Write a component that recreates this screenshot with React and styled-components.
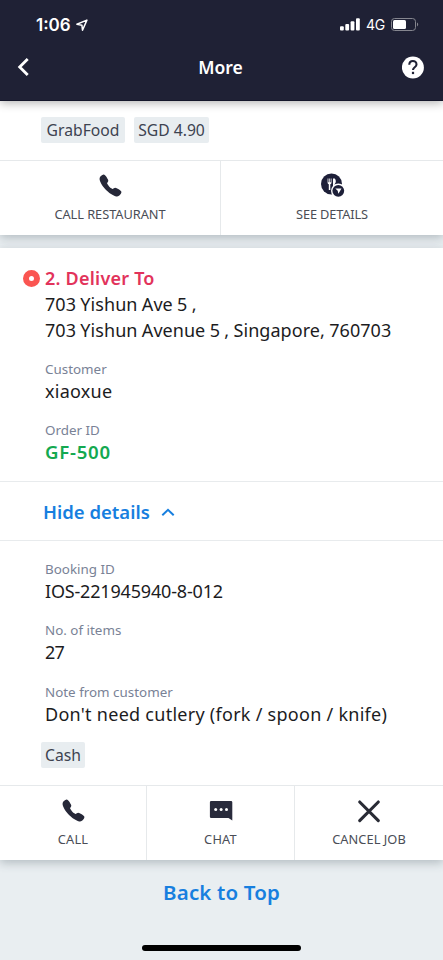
import React from 'react';
import styled, { createGlobalStyle } from 'styled-components';
import { IoCall } from 'react-icons/io5';

const GlobalStyle = createGlobalStyle`
  * { box-sizing: border-box; }
  body { margin: 0; background: #e9eef1; }
`;

const Screen = styled.div`
  display: flex;
  flex-direction: column;
  width: 443px;
  height: 960px;
  overflow: hidden;
  background: #e9eef1;
  color: #1c1c1e;
  font-family: 'Noto Sans', 'Open Sans', sans-serif;
`;

const Header = styled.header`
  flex: none;
  height: 101px;
  background: #1f2135;
  color: #fff;
  border-bottom: 1px solid #14162a;
  box-shadow: 0 2px 9px rgba(0, 0, 0, 0.3);
  z-index: 1;
`;

const StatusBar = styled.div`
  display: flex;
  align-items: center;
  justify-content: space-between;
  height: 49px;
  padding: 0 24px 0 36px;
  font-family: Inter, sans-serif;
`;

const StatusGroup = styled.div`
  display: flex;
  align-items: center;
  gap: ${(p) => p.$gap}px;
`;

const Clock = styled.span`
  font-size: 17px;
  font-weight: 600;
`;

const Network = styled.span`
  width: 19px;
  font-size: 14px;
  letter-spacing: -0.3px;
`;

const NavBar = styled.div`
  display: grid;
  grid-template-columns: 60px 1fr 60px;
  align-items: center;
  height: 36px;
  padding: 0 18px 0 16px;
`;

const NavTitle = styled.h1`
  margin: 0;
  text-align: center;
  font-size: 17.5px;
  font-weight: 600;
  line-height: 36px;
`;

const NavButton = styled.button`
  display: flex;
  justify-content: ${(p) => p.$align};
  padding: 0;
  border: 0;
  background: none;
  color: inherit;
`;

const Card = styled.section`
  flex: none;
  margin-bottom: ${(p) => p.$gap || 0}px;
  background: #fff;
  box-shadow: 0 3px 9px rgba(60, 75, 85, 0.3);
`;

const Tags = styled.div`
  display: flex;
  gap: 9px;
  padding: ${(p) => p.$pad};
`;

const Tag = styled.span`
  width: ${(p) => p.$w}px;
  height: 26px;
  border-radius: 2px;
  background: #e8edf0;
  color: #3d4350;
  text-align: center;
  font-size: 15.7px;
  line-height: 27px;
  letter-spacing: ${(p) => p.$ls || 0}px;
  white-space: nowrap;
`;

const Actions = styled.div`
  display: grid;
  grid-template-columns: ${(p) => p.$cols};
  height: 75px;
  border-top: 1px solid #e6e9eb;
`;

const Action = styled.button`
  display: flex;
  flex-direction: column;
  align-items: center;
  padding: 11px 0 0;
  border: 0;
  border-right: 1px solid #e6e9eb;
  background: none;
  color: #4a4d56;
  font: 400 12.8px/20px 'Noto Sans', sans-serif;
  letter-spacing: ${(p) => p.$ls || 0}px;
  white-space: nowrap;
  &:last-child { border-right: 0; }
`;

const ActionIcon = styled.span`
  display: flex;
  align-items: center;
  justify-content: center;
  height: 27px;
  margin-bottom: 5px;
  color: #262838;
`;

const Delivery = styled.div`
  height: 233px;
  padding: 17px 20px 0 45px;
`;

const Heading = styled.h2`
  display: flex;
  align-items: center;
  gap: 5px;
  margin: 0 0 0 -22px;
  color: #e2335b;
  font-size: 18px;
  font-weight: 600;
  line-height: 26px;
  letter-spacing: 0.22px;
`;

const StopMarker = styled.i`
  width: 17px;
  height: 17px;
  border: 6px solid #fa5551;
  border-radius: 50%;
  background: #fff;
`;

const Address = styled.p`
  margin: 1px 0 16px;
  font-size: 18px;
  line-height: 25.5px;
  letter-spacing: 0.05px;
  word-spacing: -0.4px;
  white-space: nowrap;
`;

const Field = styled.div`
  height: 44px;
  margin-bottom: 17.4px;
`;

const Label = styled.div`
  color: #798296;
  font-size: 13.4px;
  line-height: 20px;
`;

const Value = styled.div`
  color: ${(p) => p.$color || 'inherit'};
  font-size: ${(p) => p.$size || 18}px;
  font-weight: ${(p) => p.$weight || 400};
  line-height: 24px;
  letter-spacing: ${(p) => p.$ls || 0}px;
  white-space: nowrap;
`;

const Toggle = styled.button`
  display: flex;
  align-items: center;
  gap: 11px;
  width: 100%;
  height: 60px;
  padding: 2px 0 0 43px;
  border: 0;
  border-top: 1px solid #e8ebed;
  border-bottom: 1px solid #e8ebed;
  background: none;
  color: #177fdf;
  font: 600 18.5px/26px 'Noto Sans', sans-serif;
`;

const Details = styled.div`
  height: 201px;
  padding: 18px 20px 0 45px;
`;

const BackToTop = styled.a`
  display: block;
  margin-top: 18px;
  text-align: center;
  color: #177fdf;
  font-size: 20.5px;
  font-weight: 600;
  line-height: 28px;
  letter-spacing: 0.15px;
`;

const HomeIndicator = styled.div`
  width: 159px;
  height: 6px;
  margin: auto auto 9px 142px;
  border-radius: 3px;
  background: #000;
`;

const LocationIcon = () => (
  <svg width="12" height="12" viewBox="0 0 12 12" fill="none" stroke="#fff" strokeWidth="1.5" strokeLinejoin="round">
    <path d="M10.9 1.100 .9 5.300l5 .9.6 5z" />
  </svg>
);

const SignalIcon = () => (
  <svg width="20" height="13" viewBox="0 0 20 13" fill="#fff">
    <rect x="0" y="8.3" width="3.8" height="4.2" rx="1" />
    <rect x="5.3" y="6" width="3.8" height="6.5" rx="1" />
    <rect x="10.6" y="3.2" width="3.8" height="9.3" rx="1" />
    <rect x="16" y="0.2" width="3.8" height="12.3" rx="1" />
  </svg>
);

const BatteryIcon = () => (
  <svg width="28" height="13" viewBox="0 0 28 13">
    <rect x="0.5" y="0.5" width="24" height="12" rx="3" fill="none" stroke="#85868f" />
    <rect x="2" y="2" width="13" height="9" rx="1.5" fill="#fff" />
    <path d="M26 4.6c1.6.6 1.6 3.2 0 3.8z" fill="#85868f" />
  </svg>
);

const BackIcon = () => (
  <svg width="14" height="20" viewBox="0 0 14 20" fill="none" stroke="#fff" strokeWidth="2.800">
    <path d="M11.700 2 3.700 10l8 8" />
  </svg>
);

const HelpIcon = () => (
  <svg width="23" height="23" viewBox="0 0 23 23" fill="none">
    <circle cx="10.900" cy="11.500" r="11" fill="#fff" />
    <path d="M7.300 8.700c0-5 7.200-4.900 7.200-.3 0 2.700-3.500 2.900-3.500 5.500" stroke="#1f2135" strokeWidth="2.100" />
    <rect x="9.900" y="15.800" width="2.200" height="2.300" fill="#1f2135" />
  </svg>
);

const DetailsIcon = () => (
  <svg width="25" height="25" viewBox="0 0 25 25">
    <circle cx="11.500" cy="11" r="10.500" fill="#1d1f38" />
    <path d="M7.600 5.500v4.200q0 1.300 1.200 1.500V17h1.500v-5.800q1.200-.2 1.200-1.500V5.500h-.8v3.700h-.8V5.500h-.7v3.700h-.8V5.500z" fill="#fff" />
    <path d="M13 5.500h1.700c1.500 1.500 1.600 4.300 0 5.500v3H13z" fill="#fff" />
    <circle cx="18.300" cy="17.800" r="7.300" fill="#fff" />
    <circle cx="18.300" cy="17.800" r="5.900" fill="#1d1f38" />
    <path d="m15.300 15.500 6.200 0-3.100 5.200-.7-2.900z" fill="#fff" />
  </svg>
);

const ChatIcon = () => (
  <svg width="24" height="21" viewBox="0 0 24 21">
    <path d="M2.200 1h19.800q1.300 0 1.300 1.300V20.500L19.500 18H2.200Q.9 18 .9 16.700V2.300Q.9 1 2.200 1z" fill="#292b3c" />
    <g fill="#fff">
      <circle cx="6.700" cy="9.500" r="1.500" />
      <circle cx="12.100" cy="9.500" r="1.500" />
      <circle cx="17.500" cy="9.500" r="1.500" />
    </g>
  </svg>
);

const CrossIcon = () => (
  <svg width="24" height="24" viewBox="0 0 24 24" fill="none" stroke="#292b35" strokeWidth="3.100" strokeLinecap="round">
    <path d="M2.700 3l18.600 18.600M21.300 3 2.700 21.600" />
  </svg>
);

const ChevronUpIcon = () => (
  <svg width="14" height="9" viewBox="0 0 14 9" fill="none" stroke="#177fdf" strokeWidth="2">
    <path d="m1.300 7.300 5.700-5.500 5.700 5.500" />
  </svg>
);

function ActionButton({ icon, ls, children }) {
  return (
    <Action $ls={ls}>
      <ActionIcon>{icon}</ActionIcon>
      {children}
    </Action>
  );
}

function InfoField({ label, children, ...style }) {
  return (
    <Field>
      <Label>{label}</Label>
      <Value {...style}>{children}</Value>
    </Field>
  );
}

export default function App() {
  return (
    <Screen>
      <GlobalStyle />
      <Header>
        <StatusBar>
          <StatusGroup $gap={5}>
            <Clock>1:06</Clock>
            <LocationIcon />
          </StatusGroup>
          <StatusGroup $gap={6}>
            <SignalIcon />
            <Network>4G</Network>
            <BatteryIcon />
          </StatusGroup>
        </StatusBar>
        <NavBar>
          <NavButton $align="flex-start" aria-label="Back"><BackIcon /></NavButton>
          <NavTitle>More</NavTitle>
          <NavButton $align="flex-end" aria-label="Help"><HelpIcon /></NavButton>
        </NavBar>
      </Header>

      <Card $gap={13}>
        <Tags $pad="16px 0 17px 41px">
          <Tag $w={84}>GrabFood</Tag>
          <Tag $w={75}>SGD 4.90</Tag>
        </Tags>
        <Actions $cols="221px 222px">
          <ActionButton ls={-0.05} icon={<IoCall size={25} />}>CALL RESTAURANT</ActionButton>
          <ActionButton ls={-0.15} icon={<DetailsIcon />}>SEE DETAILS</ActionButton>
        </Actions>
      </Card>

      <Card>
        <Delivery>
          <Heading><StopMarker />2. Deliver To</Heading>
          <Address>703 Yishun Ave 5 ,<br />703 Yishun Avenue 5 , Singapore, 760703</Address>
          <InfoField label="Customer" $ls={0.25}>xiaoxue</InfoField>
          <InfoField label="Order ID" $color="#14a950" $weight={600} $size={18.6} $ls={0.75}>GF-500</InfoField>
        </Delivery>
        <Toggle>Hide details<ChevronUpIcon /></Toggle>
        <Details>
          <InfoField label="Booking ID" $ls={-0.18}>IOS-221945940-8-012</InfoField>
          <InfoField label="No. of items" $ls={-0.7}>27</InfoField>
          <InfoField label="Note from customer" $ls={0.27}>Don't need cutlery (fork / spoon / knife)</InfoField>
        </Details>
        <Tags $pad="0 0 17px 41px">
          <Tag $w={44}>Cash</Tag>
        </Tags>
        <Actions $cols="147px 148px 148px">
          <ActionButton ls={0.15} icon={<IoCall size={25} />}>CALL</ActionButton>
          <ActionButton ls={0.2} icon={<ChatIcon />}>CHAT</ActionButton>
          <ActionButton ls={0.05} icon={<CrossIcon />}>CANCEL JOB</ActionButton>
        </Actions>
      </Card>

      <BackToTop>Back to Top</BackToTop>
      <HomeIndicator />
    </Screen>
  );
}
